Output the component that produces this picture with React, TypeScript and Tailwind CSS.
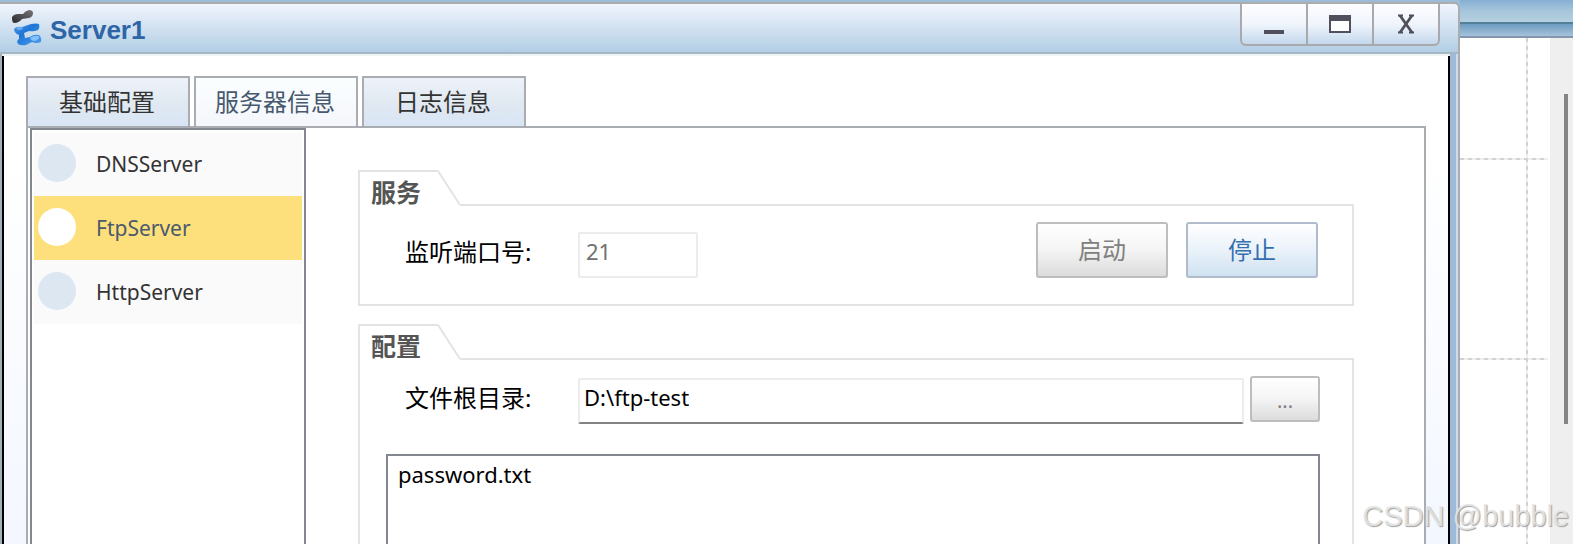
import { useState, type ReactNode } from "react"
import clsx from "clsx"

const tabs = ["基础配置", "服务器信息", "日志信息"]

const servers = ["DNSServer", "FtpServer", "HttpServer"]

const files = ["password.txt"]

function ServerLogo() {
  return (
    <svg viewBox="0 0 30 36" className="h-9 w-[30px]" aria-hidden="true">
      <defs>
        <linearGradient id="logoDark" x1="0" y1="1" x2="1" y2="0">
          <stop offset="0" stopColor="#29292b" />
          <stop offset="0.6" stopColor="#58585b" />
          <stop offset="1" stopColor="#77777a" />
        </linearGradient>
        <linearGradient id="logoBlue" x1="0" y1="0" x2="1" y2="1">
          <stop offset="0" stopColor="#4f9ae8" />
          <stop offset="0.4" stopColor="#1f76d6" />
          <stop offset="1" stopColor="#4f9ff0" />
        </linearGradient>
      </defs>
      <path
        d="M0 7 Q2 4 6 4 L11 4 Q13 1 17 0 Q21 0 21 3 Q21 7 17 8 L10 9 Q7 13 2 13 Q0 12 0 9Z"
        fill="url(#logoDark)"
      />
      <path
        d="M2 19 Q4 16 10 17 L19 14 Q24 13 27 14 Q28 18 26 20 Q22 22 17 21 L12 23 L13 28 L18 27 Q22 24 27 25 Q30 28 29 32 Q25 34 20 32 L14 35 Q9 36 6 34 Q4 31 7 29 L7 25 Q2 23 2 19Z"
        fill="url(#logoBlue)"
      />
      <path d="M18 28 Q22 25 27 26 Q28 29 23 31 Q19 31 18 28Z" fill="#85c0f9" />
      <path d="M4 18 Q8 16 11 18 Q10 20 6 20Z" fill="#6fadf0" />
    </svg>
  )
}

function TitleBar() {
  const control = "flex w-[66px] items-center justify-center border-l-2 border-[#a9a9ad] first:w-16 first:border-l-0"

  return (
    <header className="flex h-[50px] items-start border-b-2 border-[#a5b8c5] bg-gradient-to-b from-[#f1f5fd] to-[#b2cee5] pr-[18px] pl-3">
      <div className="flex flex-1 items-center gap-2 pt-[6px]">
        <ServerLogo />
        <h1 className="pt-1 text-[26px] leading-8 font-bold text-[#2d65a6]">Server1</h1>
      </div>
      <div className="flex h-[42px] overflow-hidden rounded-b-[6px] border-2 border-t-0 border-[#a9a9ad] bg-gradient-to-b from-[#fdfdff] via-[#f0f5fc] to-[#c3d8ec]">
        <button type="button" aria-label="最小化" className={control}>
          <svg viewBox="0 0 20 20" className="size-5">
            <path d="M0 16h20v4H0z" fill="#50505c" />
          </svg>
        </button>
        <button type="button" aria-label="最大化" className={control}>
          <svg viewBox="0 0 22 18" className="h-[18px] w-[22px]">
            <path d="M1 1h20v16H1z" fill="#fff" stroke="#50505c" strokeWidth="2" />
            <path d="M0 0h22v6H0z" fill="#50505c" />
          </svg>
        </button>
        <button type="button" aria-label="关闭" className={control}>
          <svg viewBox="0 0 18 20" className="h-5 w-[18px]">
            <path d="M3 1.5 15 18.5M15 1.5 3 18.5" stroke="#50505c" strokeWidth="2.8" />
            <path d="M1 1.5h5M12 1.5h5M1 18.5h5M12 18.5h5" stroke="#50505c" strokeWidth="2" />
          </svg>
        </button>
      </div>
    </header>
  )
}

function Group({ title, className, children }: { title: string; className?: string; children: ReactNode }) {
  return (
    <section className={clsx("flex flex-col", className)}>
      {/* Folder-style heading with a slanted edge */}
      <div className="flex h-9">
        <h2 className="w-20 border-t-2 border-l-2 border-[#e3e3e3] pl-[11px] text-[25px] leading-10 font-bold text-[#555]">
          {title}
        </h2>
        <svg viewBox="0 0 22 36" className="h-9 w-[22px]" aria-hidden="true">
          <path d="M0 1 L22 35" stroke="#e3e3e3" strokeWidth="2" fill="none" />
        </svg>
        <div className="flex-1 border-b-2 border-[#e3e3e3]" />
      </div>
      {children}
    </section>
  )
}

const grayButton =
  "rounded-[3px] border-2 border-[#bdbdbd] bg-gradient-to-b from-white via-[#f4f4f4] to-[#dcdcdc] text-[#808080]"

function ServerPanel() {
  return (
    <div className="flex flex-1 flex-col pt-[42px] pr-[70px] pl-[52px]">
      <Group title="服务">
        <div className="flex items-end border-x-2 border-b-2 border-[#e3e3e3] pt-4 pr-[34px] pb-[26px] pl-[45px]">
          <label htmlFor="port" className="w-[173px] pb-2 text-2xl leading-9">
            监听端口号:
          </label>
          <input
            id="port"
            defaultValue="21"
            disabled
            className="h-[46px] w-[120px] rounded-[2px] border-2 border-[#ececec] bg-white px-[6px] pb-2 text-[22px] text-[#707070]"
          />
          <div className="ml-auto flex gap-[18px]">
            <button type="button" disabled className={clsx("h-14 w-[132px] text-2xl", grayButton)}>
              启动
            </button>
            <button
              type="button"
              className="h-14 w-[132px] rounded-[3px] border-2 border-[#b0bccc] bg-gradient-to-b from-white via-[#eaf2fa] to-[#d0e2f1] text-2xl text-[#356fae]"
            >
              停止
            </button>
          </div>
        </div>
      </Group>

      <Group title="配置" className="mt-[18px] flex-1">
        <div className="flex flex-1 flex-col border-x-2 border-[#e3e3e3] pt-4 pr-8 pl-[26px]">
          <div className="flex items-start pl-[19px]">
            <label htmlFor="root-dir" className="w-[173px] text-2xl leading-[44px]">
              文件根目录:
            </label>
            <input
              id="root-dir"
              defaultValue="D:\ftp-test"
              className="mt-[2px] h-[46px] min-w-0 flex-1 rounded-[2px] border-2 border-[#ececec] border-b-[#828282] bg-white px-1 pb-2 text-[22px] text-black"
            />
            <button
              type="button"
              aria-label="浏览"
              className={clsx("ml-[6px] h-[46px] w-[70px] pt-1 text-xl", grayButton)}
            >
              ...
            </button>
          </div>
          <ul className="mt-[30px] flex-1 border-2 border-b-0 border-[#828790] bg-white px-[10px]">
            {files.map((file) => (
              <li key={file} className="text-[22px] leading-9">
                {file}
              </li>
            ))}
          </ul>
        </div>
      </Group>
    </div>
  )
}

function Canvas() {
  return (
    <div className="relative flex w-[113px] shrink-0 flex-col overflow-hidden">
      <div className="h-[22px] bg-gradient-to-b from-[#86afd3] via-[#a7c6dc] to-[#b4cfe0]" />
      <div className="h-4 border-t-2 border-b-2 border-t-[#547f98] border-b-[#8296b0] bg-gradient-to-b from-[#6c9cc0] to-[#a5c3da]" />
      <div className="flex flex-1 justify-end bg-white">
        <div className="w-[23px] bg-[#efefef] pt-14 pl-[14px]">
          <div className="h-[330px] w-1 bg-[#858585]" />
        </div>
      </div>
      {/* Page guides */}
      <div className="absolute top-[38px] bottom-0 left-[66px] w-[2px] bg-[repeating-linear-gradient(to_bottom,#d2d2d2_0_4px,#eeeeee_4px_8px)]" />
      <div className="absolute top-[158px] left-0 h-[2px] w-[88px] bg-[repeating-linear-gradient(to_right,#d2d2d2_0_4px,#eeeeee_4px_8px)]" />
      <div className="absolute top-[358px] left-0 h-[2px] w-[88px] bg-[repeating-linear-gradient(to_right,#d2d2d2_0_4px,#eeeeee_4px_8px)]" />
    </div>
  )
}

export default function App() {
  const [activeTab, setActiveTab] = useState(1)
  const [activeServer, setActiveServer] = useState(1)

  return (
    <div className="relative flex min-h-screen overflow-hidden bg-white font-['Noto_Sans','Noto_Sans_CJK_SC',sans-serif] text-black">
      <main className="flex min-w-0 flex-1 flex-col bg-[#9dbcd6] pt-[2px]">
        <div className="flex flex-1 flex-col overflow-hidden rounded-tr-[6px] border-t-2 border-r-2 border-[#a9adb0] bg-[#9dbbd8] font-['Liberation_Sans','Noto_Sans_CJK_SC',sans-serif]">
          <TitleBar />
          <div className="flex flex-1 border-r-2 border-l-2 border-r-[#cfdbe8] border-l-[#a0b0b8] pr-[6px] font-['Noto_Sans','Noto_Sans_CJK_SC',sans-serif]">
            <div className="flex flex-1 flex-col border-t-2 border-[#f0f3f3]">
              <div className="flex flex-1 flex-col border-x-2 border-black bg-gradient-to-b from-white from-20% to-[#f3f7ff] px-[22px] pt-5">
                <div role="tablist" className="flex gap-1">
                  {tabs.map((tab, index) => (
                    <button
                      key={tab}
                      type="button"
                      role="tab"
                      aria-selected={index === activeTab}
                      onClick={() => setActiveTab(index)}
                      className={clsx(
                        "h-[50px] w-[164px] border-2 border-b-0 border-[#a9adb1] bg-gradient-to-b pr-[2px] text-2xl",
                        index === activeTab
                          ? "from-[#fbfeff] to-[#f4f6fb] text-[#46596e]"
                          : "from-[#eef2fa] via-[#e1e9f1] to-[#d8e5f5] text-[#333]"
                      )}
                    >
                      {tab}
                    </button>
                  ))}
                </div>

                <div className="flex flex-1 border-2 border-b-0 border-[#a9adb1] bg-white pl-[2px]">
                  <nav className="w-[276px] border-2 border-b-0 border-[#828790] p-[2px]">
                    {servers.map((server, index) => (
                      <button
                        key={server}
                        type="button"
                        onClick={() => setActiveServer(index)}
                        className={clsx(
                          "flex h-16 w-full items-center gap-5 pb-[2px] pl-1 text-[21px]",
                          index === activeServer ? "bg-[#fde07c] text-[#4a5a6c]" : "bg-[#fafafa] text-[#333]"
                        )}
                      >
                        <span
                          className={clsx(
                            "size-[38px] rounded-full",
                            index === activeServer ? "bg-white" : "bg-[#dde7f2]"
                          )}
                        />
                        <span className="pt-1">{server}</span>
                      </button>
                    ))}
                  </nav>
                  <ServerPanel />
                </div>
              </div>
            </div>
          </div>
        </div>
      </main>

      <Canvas />

      {/* Watermark */}
      <p className="absolute right-1 bottom-2 font-['Liberation_Sans',sans-serif] text-[29px] leading-10 text-[#e6e6e6]/90 [text-shadow:1px_1px_1px_#a0a0a0]">
        CSDN @bubble
      </p>
    </div>
  )
}
